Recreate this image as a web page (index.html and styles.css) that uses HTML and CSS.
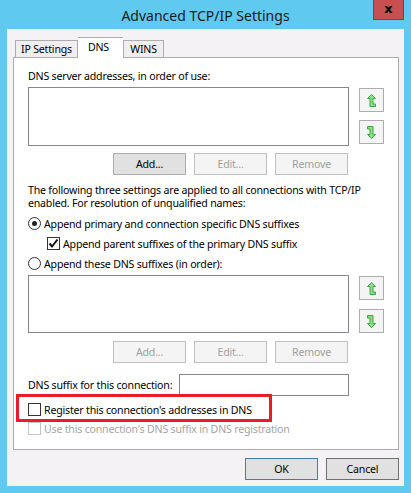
FILE: index.html
```html
<!DOCTYPE html>
<html lang="en">
<head>
    <meta charset="UTF-8">
    <title>Advanced TCP/IP Settings</title>
    <link rel="stylesheet" href="styles.css">
</head>
<body>
    <div class="window">
        <div class="titlebar">
            <span></span>
            <span class="title">Advanced TCP/IP Settings</span>
            <div class="close">x</div>
        </div>

        <div class="client">
            <div class="tabs">
                <div class="tab ip">IP Settings</div>
                <div class="tab selected">DNS</div>
                <div class="tab wins">WINS</div>
            </div>

            <div class="panel">
                <div class="label">DNS server addresses, in order of use:</div>
                <div class="list-row">
                    <div class="listbox"></div>
                    <div class="arrows">
                        <div class="arrow-btn">
                            <svg width="9" height="13" viewBox="0 0 9 13"><polygon points="4.5,0.5 8.5,4.5 6,4.5 6,10 8.5,10 8.5,12.5 3,12.5 3,4.5 0.5,4.5" /></svg>
                        </div>
                        <div class="arrow-btn">
                            <svg width="9" height="13" viewBox="0 0 9 13"><polygon points="0.5,0.5 6,0.5 6,8.5 8.5,8.5 4.5,12.5 0.5,8.5 3,8.5 3,3 0.5,3" /></svg>
                        </div>
                    </div>
                </div>
                <div class="button-row">
                    <div class="btn">Add...</div>
                    <div class="btn disabled">Edit...</div>
                    <div class="btn disabled">Remove</div>
                </div>

                <p class="note">The following three settings are applied to all connections with TCP/IP enabled. For resolution of unqualified names:</p>

                <div class="option radio-first">
                    <span class="radio checked"></span>
                    Append primary and connection specific DNS suffixes
                </div>
                <div class="option nested">
                    <span class="check checked">
                        <svg width="11" height="11" viewBox="0 0 11 11"><path d="M1.5 5.5 L4 8.5 L9.5 1.5" /></svg>
                    </span>
                    Append parent suffixes of the primary DNS suffix
                </div>
                <div class="option">
                    <span class="radio"></span>
                    Append these DNS suffixes (in order):
                </div>

                <div class="list-row second">
                    <div class="listbox"></div>
                    <div class="arrows wide">
                        <div class="arrow-btn">
                            <svg width="9" height="13" viewBox="0 0 9 13"><polygon points="4.5,0.5 8.5,4.5 6,4.5 6,10 8.5,10 8.5,12.5 3,12.5 3,4.5 0.5,4.5" /></svg>
                        </div>
                        <div class="arrow-btn">
                            <svg width="9" height="13" viewBox="0 0 9 13"><polygon points="0.5,0.5 6,0.5 6,8.5 8.5,8.5 4.5,12.5 0.5,8.5 3,8.5 3,3 0.5,3" /></svg>
                        </div>
                    </div>
                </div>
                <div class="button-row second">
                    <div class="btn disabled">Add...</div>
                    <div class="btn disabled">Edit...</div>
                    <div class="btn disabled">Remove</div>
                </div>

                <div class="suffix-row">
                    <span>DNS suffix for this connection:</span>
                    <div class="textbox"></div>
                </div>

                <div class="option register">
                    <span class="check"></span>
                    Register this connection's addresses in DNS
                    <div class="highlight"></div>
                </div>
                <div class="option off">
                    <span class="check"></span>
                    Use this connection's DNS suffix in DNS registration
                </div>
            </div>

            <div class="footer">
                <div class="btn default">OK</div>
                <div class="btn dark">Cancel</div>
            </div>
        </div>
    </div>
</body>
</html>
```

FILE: styles.css
```css
body {
    margin: 0;
    background-color: #5fc9ef;
    font-family: "Noto Sans", sans-serif;
    font-size: 10.6px;
    letter-spacing: -0.2px;
    color: #000;
}

.window {
    width: 397px;
    padding: 0 7px 7px 7px;
}

/* Title bar */
.titlebar {
    display: grid;
    grid-template-columns: 31px 1fr 31px;
    height: 29px;
}

.title {
    text-align: center;
    font-size: 14px;
    letter-spacing: 0;
    line-height: 31px;
    color: #1a1a1a;
}

.close {
    height: 20px;
    box-sizing: border-box;
    background-color: #c75050;
    border: 1px solid #8c3a3a;
    border-top: none;
    text-align: center;
    font-family: "DejaVu Sans", sans-serif;
    font-weight: bold;
    font-size: 13px;
    letter-spacing: 0;
    line-height: 17px;
}

.client {
    height: 457px;
    background-color: #f5f2f5;
    padding: 8px 5px 0 6px;
    box-sizing: border-box;
}

/* Tabs */
.tabs {
    display: flex;
    align-items: flex-end;
    height: 20px;
    padding-left: 2px;
}

.tab {
    height: 17px;
    box-sizing: border-box;
    border: 1px solid #adadad;
    border-bottom: none;
    background-color: #f0eef0;
    text-align: center;
    line-height: 17px;
}

.tab.ip {
    width: 63px;
}

.tab.wins {
    width: 41px;
}

.tab.selected {
    position: relative;
    width: 45px;
    height: 21px;
    margin-bottom: -1px;
    background-color: #fff;
    border-left: none;
    border-right: none;
    line-height: 18px;
    padding-right: 4px;
    z-index: 1;
}

.panel {
    height: 393px;
    box-sizing: border-box;
    background-color: #fff;
    border: 1px solid #adadad;
    padding: 11px 0 0 14px;
}

.label {
    height: 15px;
    line-height: 15px;
}

.list-row {
    display: flex;
    gap: 10px;
    margin-top: 3px;
}

.listbox {
    width: 321px;
    height: 59px;
    box-sizing: border-box;
    border: 1px solid #828790;
}

.list-row.second {
    margin-top: 4px;
}

.list-row.second .listbox {
    height: 58px;
}

.arrows {
    display: flex;
    flex-direction: column;
    gap: 8px;
    padding-top: 1px;
}

.arrows.wide {
    gap: 9px;
}

.arrow-btn {
    width: 25px;
    height: 24px;
    box-sizing: border-box;
    border: 1px solid #adadad;
    background-color: #f4f4f4;
    display: flex;
    align-items: center;
    justify-content: center;
}

.arrow-btn polygon {
    fill: #86e286;
    stroke: #3ea83e;
    stroke-width: 1;
}

/* Push buttons */
.button-row {
    display: flex;
    gap: 8px;
    margin-top: 7px;
    padding-left: 85px;
}

.button-row.second {
    margin-top: 8px;
}

.btn {
    width: 73px;
    height: 22px;
    box-sizing: border-box;
    border: 1px solid #adadad;
    background-color: #e1e1e1;
    text-align: center;
    line-height: 20px;
}

.btn.disabled {
    background-color: #f4f4f4;
    border-color: #bfbfbf;
    color: #a0a0a0;
}

.btn.default {
    border-color: #3c7fb1;
}

.btn.dark {
    border-color: #707070;
}

.note {
    margin: 9px 0 0 0;
    width: 350px;
    line-height: 13px;
}

/* Radio / check options */
.option {
    display: flex;
    align-items: center;
    gap: 3px;
    height: 15px;
    margin-top: 5px;
    white-space: nowrap;
}

.option.radio-first {
    margin-top: 6px;
}

.option.nested {
    padding-left: 19px;
}

.radio {
    width: 13px;
    height: 13px;
    box-sizing: border-box;
    border: 1px solid #333;
    border-radius: 50%;
    background-color: #fff;
    display: flex;
    align-items: center;
    justify-content: center;
}

.radio.checked::after {
    content: "";
    width: 5px;
    height: 5px;
    border-radius: 50%;
    background-color: #222;
}

.check {
    width: 13px;
    height: 13px;
    box-sizing: border-box;
    border: 1px solid #333;
    background-color: #fff;
    display: flex;
    align-items: center;
    justify-content: center;
}

.check path {
    fill: none;
    stroke: #111;
    stroke-width: 2;
}

.suffix-row {
    display: grid;
    grid-template-columns: 151px 170px;
    align-items: center;
    margin-top: 11px;
    white-space: nowrap;
}

.textbox {
    height: 22px;
    box-sizing: border-box;
    border: 1px solid #828790;
}

.option.register {
    position: relative;
    margin-top: 6px;
}

/* red annotation frame */
.highlight {
    position: absolute;
    left: -12px;
    top: -8px;
    width: 256px;
    height: 28px;
    box-sizing: border-box;
    border: 3px solid #ea1c2a;
}

.option.off {
    margin-top: 4px;
    color: #a3a3a3;
}

.option.off .check {
    border-color: #c4c4c4;
}

.footer {
    display: flex;
    justify-content: flex-end;
    gap: 8px;
    margin-top: 8px;
}
```
